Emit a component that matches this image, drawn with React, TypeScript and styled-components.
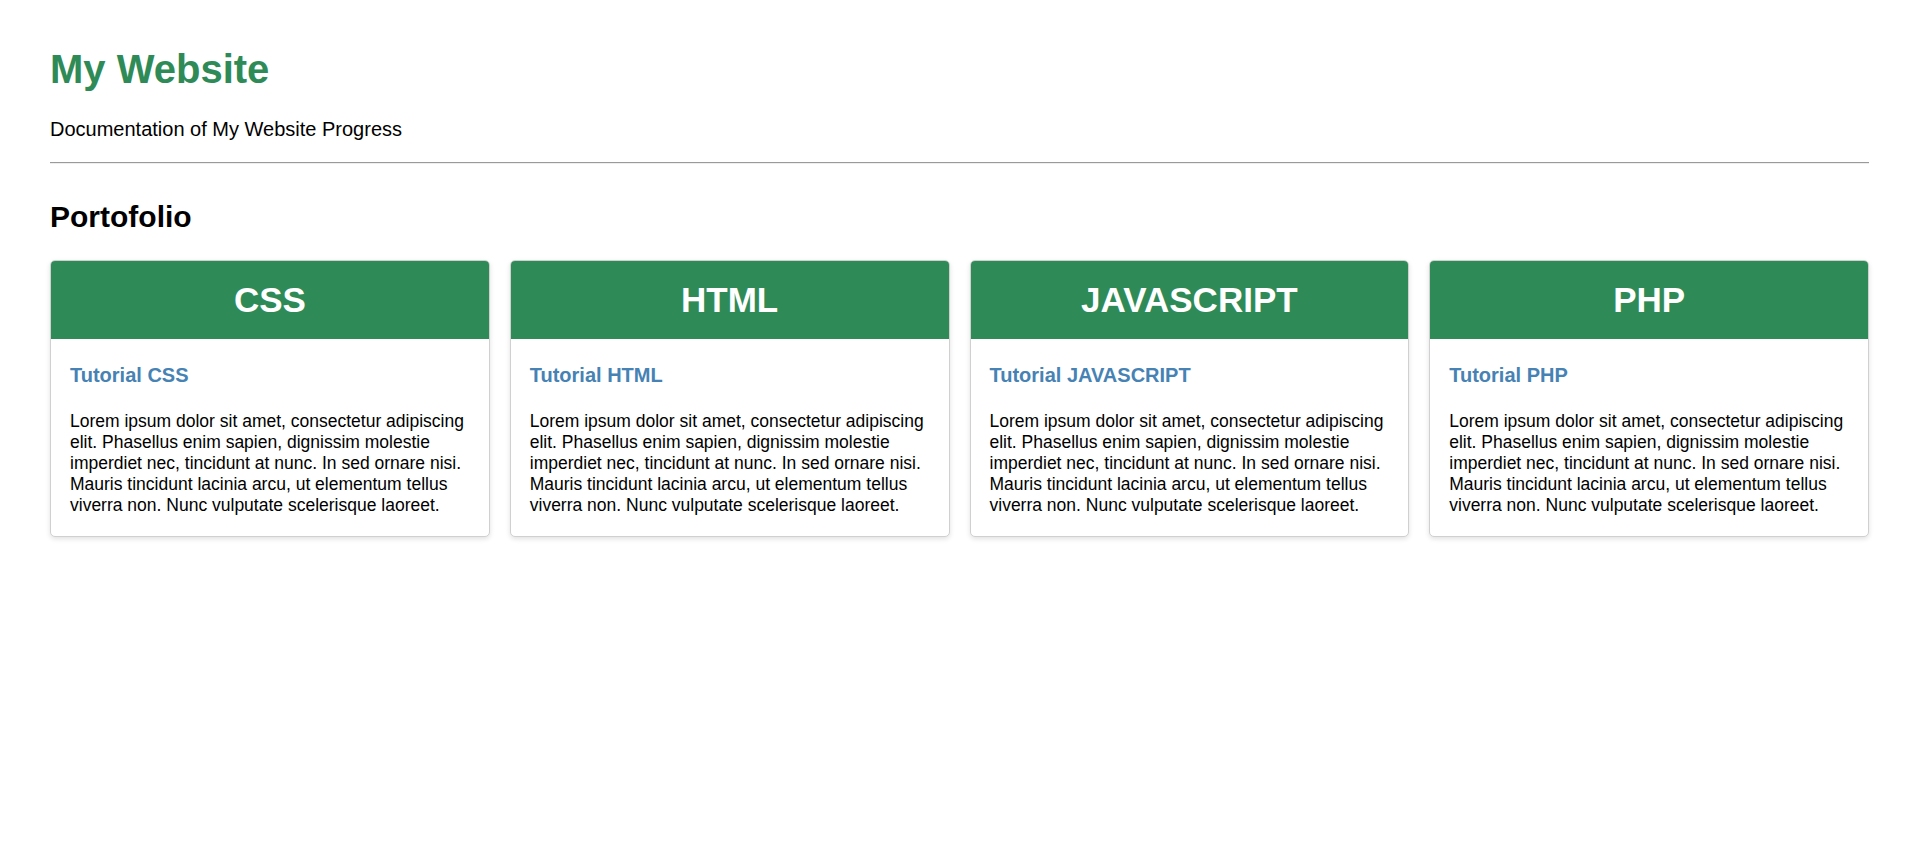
import React from "react";
import styled, { createGlobalStyle } from "styled-components";

const GlobalStyle = createGlobalStyle`
  html, body {
    margin: 0;
    padding: 0;
    background: #ffffff;
  }
  body {
    font-family: "Liberation Sans", Arial, sans-serif;
    color: #000000;
  }
`;

const Page = styled.div`
  padding: 46px 45px 40px 50px;
`;

const Header = styled.header`
  display: flex;
  flex-direction: column;
`;

const SiteTitle = styled.h1`
  margin: 0;
  font-size: 40px;
  line-height: 46px;
  font-weight: 700;
  color: #2e8b57;
`;

const Subtitle = styled.p`
  margin: 26px 0 0;
  font-size: 20px;
  line-height: 23px;
`;

const Divider = styled.hr`
  margin: 21px 0 0;
  height: 0;
  border: 0;
  border-top: 1px solid #9a9a9a;
  border-bottom: 1px solid #eeeeee;
`;

const SectionTitle = styled.h2`
  margin: 36px 0 0;
  font-size: 30px;
  line-height: 34px;
  font-weight: 700;
`;

const Grid = styled.div`
  margin-top: 26px;
  display: grid;
  grid-template-columns: repeat(4, 1fr);
  gap: 20px;
`;

const Card = styled.article`
  display: flex;
  flex-direction: column;
  border: 1px solid #d0d0d0;
  border-radius: 5px;
  overflow: hidden;
  background: #ffffff;
  box-shadow: 0 2px 5px rgba(0, 0, 0, 0.12);
`;

const CardHeader = styled.div`
  height: 78px;
  display: flex;
  align-items: center;
  justify-content: center;
  background: #2e8b57;
  color: #ffffff;
`;

const CardTitle = styled.h3`
  margin: 0;
  font-size: 35px;
  line-height: 40px;
  font-weight: 700;
`;

const CardBody = styled.div`
  padding: 25px 20px 20px 19px;
`;

const CardLink = styled.h4`
  margin: 0;
  font-size: 20px;
  line-height: 23px;
  font-weight: 700;
  color: #4682b4;
`;

const CardText = styled.p`
  margin: 24px 0 0;
  font-size: 17.5px;
  line-height: 21px;
`;

const LOREM =
  "Lorem ipsum dolor sit amet, consectetur adipiscing elit. Phasellus enim sapien, dignissim molestie imperdiet nec, tincidunt at nunc. In sed ornare nisi. Mauris tincidunt lacinia arcu, ut elementum tellus viverra non. Nunc vulputate scelerisque laoreet.";

const topics = ["CSS", "HTML", "JAVASCRIPT", "PHP"];

export default function App() {
  return (
    <>
      <GlobalStyle />
      <Page>
        <Header>
          <SiteTitle>My Website</SiteTitle>
          <Subtitle>Documentation of My Website Progress</Subtitle>
        </Header>
        <Divider />
        <SectionTitle>Portofolio</SectionTitle>
        <Grid>
          {topics.map((t) => (
            <Card key={t}>
              <CardHeader>
                <CardTitle>{t}</CardTitle>
              </CardHeader>
              <CardBody>
                <CardLink>Tutorial {t}</CardLink>
                <CardText>{LOREM}</CardText>
              </CardBody>
            </Card>
          ))}
        </Grid>
      </Page>
    </>
  );
}
